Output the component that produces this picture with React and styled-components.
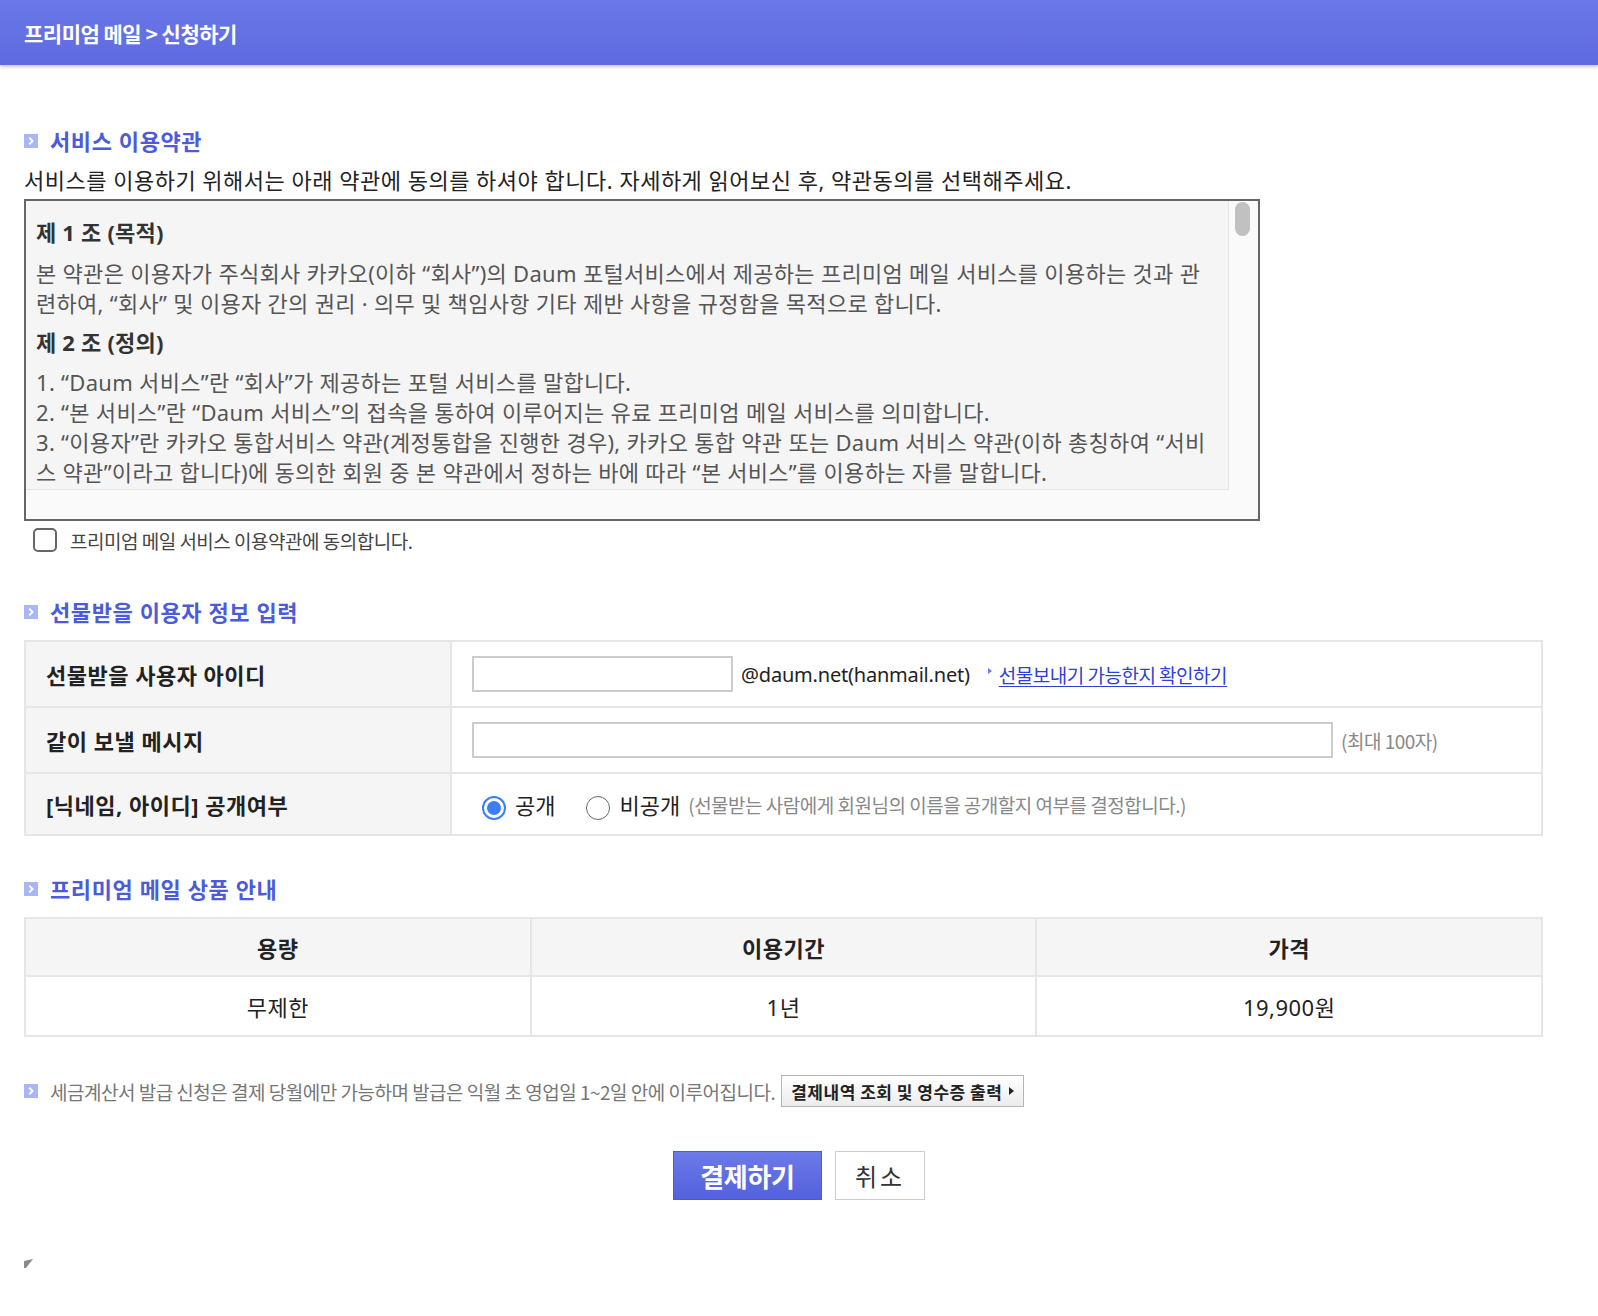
import React from "react";
import styled, { createGlobalStyle } from "styled-components";

const GlobalStyle = createGlobalStyle`
  html, body { margin: 0; padding: 0; background: #fff; }
  body {
    font-family: "Noto Sans", "Noto Sans CJK KR", sans-serif;
    color: #222;
  }
  * { box-sizing: border-box; }
`;

const KR = `"Noto Sans CJK KR", "Noto Sans", sans-serif`;

const TopBar = styled.header`
  height: 65px;
  display: flex;
  align-items: center;
  padding: 0 24px;
  background: linear-gradient(#6b78e7, #5e6ae0);
  box-shadow: 0 2px 3px rgba(0, 0, 0, 0.22);
`;

const TopTitle = styled.h1`
  margin: 0;
  font-family: ${KR};
  font-size: 21px;
  font-weight: 700;
  letter-spacing: -0.5px;
  color: #fff;
`;

const Page = styled.main`
  padding: 61px 24px 40px;
`;

const SectionTitle = styled.h2`
  display: flex;
  align-items: center;
  gap: 12px;
  margin: ${(p) => p.$mt || 0}px 0 0;
  font-size: 22px;
  letter-spacing: 0.6px;
  line-height: 30px;
  font-weight: 700;
  color: #4b5bd9;
`;

const Lead = styled.p`
  margin: 9px 0 0;
  font-size: 22px;
  letter-spacing: 0.5px;
  line-height: 30px;
  color: #222;
`;

const TermsBox = styled.div`
  margin-top: 4px;
  width: 1236px;
  height: 322px;
  border: 2px solid #666;
  background: #fafafa;
  display: grid;
  grid-template-columns: 1fr 29px;
  grid-template-rows: 1fr 29px;
`;

const TermsScroll = styled.div`
  overflow: hidden;
  background: #f5f5f5;
  border-right: 1px solid #e4e4e4;
  border-bottom: 1px solid #e4e4e4;
  padding: 16px 14px 0 10px;
`;

const ScrollTrack = styled.div`
  padding: 1px 6px;
`;

const ScrollThumb = styled.div`
  width: 15px;
  height: 34px;
  border-radius: 8px;
  background: #c1c1c1;
`;

const ArticleTitle = styled.h3`
  margin: 0 0 ${(p) => p.$mb || 11}px;
  font-size: 22px;
  letter-spacing: 0.2px;
  line-height: 30px;
  font-weight: 700;
  color: #333;
`;

const ArticleText = styled.p`
  margin: 0 0 9px;
  font-size: 22px;
  letter-spacing: 0.3px;
  line-height: 30px;
  color: #555;
`;

const AgreeRow = styled.label`
  margin-top: 4px;
  height: 30px;
  display: flex;
  align-items: center;
  gap: 13px;
  padding-left: 9px;
`;

const CheckBox = styled.span`
  width: 24px;
  height: 24px;
  border: 2px solid #666;
  border-radius: 5px;
  background: #fff;
`;

const Condensed = styled.span`
  font-family: ${KR};
  font-size: ${(p) => p.$size || 19}px;
  letter-spacing: -0.5px;
  color: ${(p) => p.$color || "#444"};
  white-space: nowrap;
`;

const FormTable = styled.table`
  margin-top: 13px;
  width: 1519px;
  border-collapse: collapse;
  border: 2px solid #e6e6e6;
  table-layout: fixed;
`;

const LabelCell = styled.th`
  width: 426px;
  height: ${(p) => p.$h || 66}px;
  padding: 0 20px;
  background: #f5f5f5;
  border: 2px solid #e6e6e6;
  text-align: left;
  font-size: 22px;
  letter-spacing: 0.5px;
  font-weight: 700;
  color: #222;
`;

const ValueCell = styled.td`
  padding: 0 20px;
  border: 2px solid #e6e6e6;
`;

const FieldLine = styled.div`
  display: flex;
  align-items: center;
`;

const TextInput = styled.input`
  width: ${(p) => p.$w}px;
  height: 36px;
  border: 2px solid #ccc;
  background: #fff;
  outline: none;
  font-size: 18px;
  padding: 0 8px;
`;

const Domain = styled.span`
  margin-left: 8px;
  font-size: 20px;
  letter-spacing: -0.2px;
  color: #222;
`;

const CheckLink = styled.a`
  margin-left: 18px;
  display: flex;
  align-items: center;
  gap: 7px;
  font-family: ${KR};
  font-size: 19px;
  letter-spacing: -0.5px;
  color: #2f3fd8;
  text-decoration: underline;
  text-underline-offset: 3px;
  cursor: pointer;
`;

const LinkArrow = styled.span`
  width: 0;
  height: 0;
  border-top: 3px solid transparent;
  border-bottom: 3px solid transparent;
  border-left: 4px solid #6c79ea;
  margin-top: -6px;
`;

const Note = styled(Condensed)`
  margin-left: ${(p) => p.$ml || 0}px;
`;

const RadioGroup = styled.div`
  display: flex;
  align-items: center;
  padding-left: 10px;
`;

const RadioLabel = styled.label`
  display: flex;
  align-items: center;
  gap: 9px;
  margin-right: ${(p) => p.$mr || 0}px;
  font-size: 22px;
  color: #222;
  font-family: ${KR};
`;

const RadioDot = styled.span`
  width: 24px;
  height: 24px;
  margin-top: 8px;
  border-radius: 50%;
  background: #fff;
  border: ${(p) => (p.$on ? "2px solid #3a7ff6" : "1.5px solid #6a6a6a")};
  display: flex;
  align-items: center;
  justify-content: center;

  &::after {
    content: "";
    width: 14px;
    height: 14px;
    border-radius: 50%;
    background: ${(p) => (p.$on ? "#3a7ff6" : "transparent")};
  }
`;

const ProductTable = styled.table`
  margin-top: 13px;
  width: 1519px;
  border-collapse: collapse;
  border: 2px solid #e6e6e6;
  table-layout: fixed;
`;

const HeadCell = styled.th`
  height: 58px;
  background: #f5f5f5;
  border: 2px solid #e6e6e6;
  font-size: 22px;
  letter-spacing: 0.5px;
  font-weight: 700;
  color: #222;
`;

const BodyCell = styled.td`
  height: 60px;
  border: 2px solid #e6e6e6;
  text-align: center;
  font-size: 22px;
  letter-spacing: 0.5px;
  color: #222;
`;

const NoticeRow = styled.div`
  margin-top: 38px;
  display: flex;
  align-items: center;
  gap: 12px;
`;

const HistoryButton = styled.button`
  margin-left: -6px;
  height: 32px;
  padding: 0 9px;
  display: flex;
  align-items: center;
  gap: 7px;
  border: 1px solid #b5b5b5;
  background: linear-gradient(#fff, #ececec);
  font-family: ${KR};
  font-size: 17px;
  font-weight: 700;
  letter-spacing: 0.5px;
  color: #222;
  cursor: pointer;
`;

const SmallArrow = styled.span`
  width: 0;
  height: 0;
  border-top: 4px solid transparent;
  border-bottom: 4px solid transparent;
  border-left: 5px solid #222;
`;

const Actions = styled.div`
  margin-top: 44px;
  display: flex;
  justify-content: center;
  gap: 13px;
`;

const PayButton = styled.button`
  width: 149px;
  height: 49px;
  border: 1px solid #4c5ad6;
  background: linear-gradient(#6d7ae8, #5361dd);
  color: #fff;
  font-family: ${KR};
  font-size: 26px;
  font-weight: 700;
  letter-spacing: -0.3px;
  cursor: pointer;
`;

const CancelButton = styled.button`
  width: 90px;
  height: 49px;
  border: 1px solid #ccc;
  background: #fff;
  color: #333;
  font-family: ${KR};
  font-size: 24px;
  letter-spacing: 3px;
  cursor: pointer;
`;

const CornerMark = styled.div`
  margin-top: 51px;
  width: 9px;
  height: 9px;
`;

function BulletIcon() {
  return (
    <svg width="14" height="14" viewBox="0 0 14 14" aria-hidden="true">
      <rect width="14" height="14" fill="#a9b5f6" />
      <path d="M5.2 3.6 L8.6 7 L5.2 10.4" stroke="#fff" strokeWidth="2" fill="none" />
    </svg>
  );
}

export default function App() {
  return (
    <>
      <GlobalStyle />
      <TopBar>
        <TopTitle>프리미엄 메일 &gt; 신청하기</TopTitle>
      </TopBar>

      <Page>
        <SectionTitle>
          <BulletIcon />
          서비스 이용약관
        </SectionTitle>
        <Lead>
          서비스를 이용하기 위해서는 아래 약관에 동의를 하셔야 합니다. 자세하게 읽어보신 후, 약관동의를 선택해주세요.
        </Lead>

        <TermsBox>
          <TermsScroll>
            <ArticleTitle>제 1 조 (목적)</ArticleTitle>
            <ArticleText>
              본 약관은 이용자가 주식회사 카카오(이하 “회사”)의 Daum 포털서비스에서 제공하는 프리미엄 메일 서비스를 이용하는 것과 관련하여, “회사” 및 이용자 간의 권리 · 의무 및 책임사항 기타 제반 사항을 규정함을 목적으로 합니다.
            </ArticleText>
            <ArticleTitle $mb={10}>제 2 조 (정의)</ArticleTitle>
            <ArticleText>
              1. “Daum 서비스”란 “회사”가 제공하는 포털 서비스를 말합니다.
              <br />
              2. “본 서비스”란 “Daum 서비스”의 접속을 통하여 이루어지는 유료 프리미엄 메일 서비스를 의미합니다.
              <br />
              3. “이용자”란 카카오 통합서비스 약관(계정통합을 진행한 경우), 카카오 통합 약관 또는 Daum 서비스 약관(이하 총칭하여 “서비스 약관”이라고 합니다)에 동의한 회원 중 본 약관에서 정하는 바에 따라 “본 서비스”를 이용하는 자를 말합니다.
            </ArticleText>
          </TermsScroll>
          <ScrollTrack>
            <ScrollThumb />
          </ScrollTrack>
          <div />
          <div />
        </TermsBox>

        <AgreeRow>
          <CheckBox />
          <Condensed>프리미엄 메일 서비스 이용약관에 동의합니다.</Condensed>
        </AgreeRow>

        <SectionTitle $mt={42}>
          <BulletIcon />
          선물받을 이용자 정보 입력
        </SectionTitle>
        <FormTable>
          <tbody>
            <tr>
              <LabelCell>선물받을 사용자 아이디</LabelCell>
              <ValueCell>
                <FieldLine>
                  <TextInput $w={261} />
                  <Domain>@daum.net(hanmail.net)</Domain>
                  <CheckLink>
                    <LinkArrow />
                    선물보내기 가능한지 확인하기
                  </CheckLink>
                </FieldLine>
              </ValueCell>
            </tr>
            <tr>
              <LabelCell>같이 보낼 메시지</LabelCell>
              <ValueCell>
                <FieldLine>
                  <TextInput $w={861} />
                  <Note $ml={8} $color="#888">(최대 100자)</Note>
                </FieldLine>
              </ValueCell>
            </tr>
            <tr>
              <LabelCell $h={62}>[닉네임, 아이디] 공개여부</LabelCell>
              <ValueCell>
                <RadioGroup>
                  <RadioLabel $mr={31}>
                    <RadioDot $on />
                    공개
                  </RadioLabel>
                  <RadioLabel $mr={8}>
                    <RadioDot />
                    비공개
                  </RadioLabel>
                  <Note $color="#888">(선물받는 사람에게 회원님의 이름을 공개할지 여부를 결정합니다.)</Note>
                </RadioGroup>
              </ValueCell>
            </tr>
          </tbody>
        </FormTable>

        <SectionTitle $mt={38}>
          <BulletIcon />
          프리미엄 메일 상품 안내
        </SectionTitle>
        <ProductTable>
          <thead>
            <tr>
              <HeadCell>용량</HeadCell>
              <HeadCell>이용기간</HeadCell>
              <HeadCell>가격</HeadCell>
            </tr>
          </thead>
          <tbody>
            <tr>
              <BodyCell>무제한</BodyCell>
              <BodyCell>1년</BodyCell>
              <BodyCell>19,900원</BodyCell>
            </tr>
          </tbody>
        </ProductTable>

        <NoticeRow>
          <BulletIcon />
          <Condensed $color="#777">
            세금계산서 발급 신청은 결제 당월에만 가능하며 발급은 익월 초 영업일 1~2일 안에 이루어집니다.
          </Condensed>
          <HistoryButton>
            결제내역 조회 및 영수증 출력
            <SmallArrow />
          </HistoryButton>
        </NoticeRow>

        <Actions>
          <PayButton>결제하기</PayButton>
          <CancelButton>취소</CancelButton>
        </Actions>

        <CornerMark>
          <svg width="9" height="9" viewBox="0 0 9 9" aria-hidden="true">
            <polygon points="0,2 9,0 2,9 0,9" fill="#8a8a8a" />
          </svg>
        </CornerMark>
      </Page>
    </>
  );
}
